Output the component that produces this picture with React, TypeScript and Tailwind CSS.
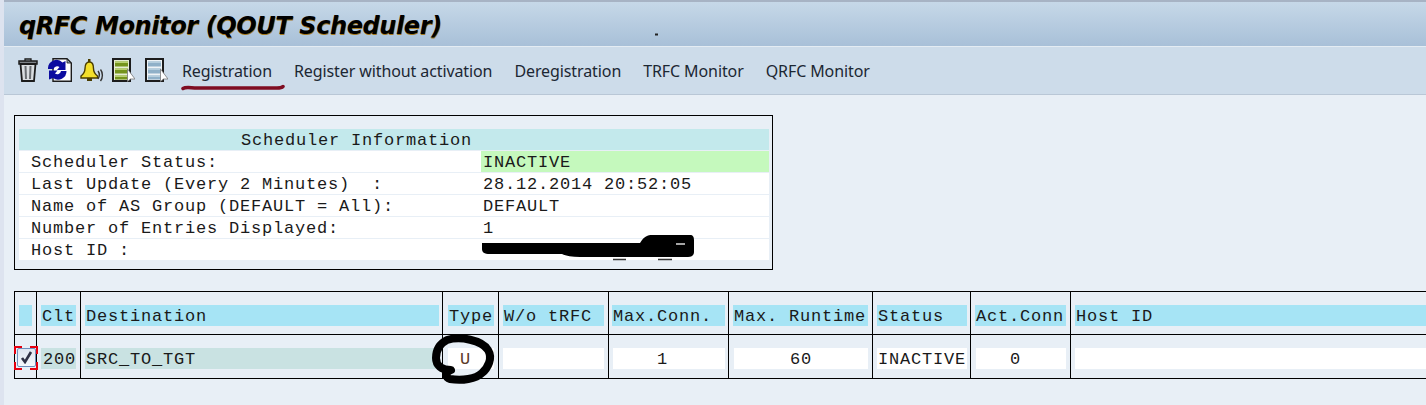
const MONO = "font-['Liberation_Mono',monospace] text-[17px] leading-[23px] tracking-[0.8px] text-[#1a1a1a] whitespace-pre";

const infoRows = [
  { label: "Scheduler Status:", value: "INACTIVE", green: true },
  { label: "Last Update (Every 2 Minutes)  :", value: "28.12.2014 20:52:05" },
  { label: "Name of AS Group (DEFAULT = All):", value: "DEFAULT" },
  { label: "Number of Entries Displayed:", value: "1" },
  { label: "Host ID :", value: "" },
];

function TrashIcon() {
  return (
    <svg width="20" height="24" viewBox="0 0 20 24">
      <path d="M1 3h18v3H1z" fill="#7d8287" stroke="#1c1c1c" strokeWidth="1.500" />
      <path d="M7 3V1h6v2" fill="none" stroke="#1c1c1c" strokeWidth="1.300" />
      <path d="M2.500 6h15l-1.500 17H4z" fill="#d9dde0" stroke="#1c1c1c" strokeWidth="1.800" />
      <path d="M7.500 8l.5 13M12.500 8l-.5 13" stroke="#6a6e72" strokeWidth="2" />
    </svg>
  );
}

function RefreshIcon() {
  return (
    <svg width="24" height="24" viewBox="0 0 24 24">
      <path d="M5 .7h14l4.300 4.300v18.300H5z" fill="#fff" stroke="#1c1c1c" strokeWidth="1.400" />
      <path d="M19 1v4h4z" fill="#8fa3a8" stroke="#1c1c1c" strokeWidth="0.800" />
      <path d="M0 11a8.500 8.500 0 0 1 14.500-6.500l3-1.500v9h-8.500l2.500-3a3.800 3.800 0 0 0-6 2z" fill="#0c0ca0" />
      <path d="M18.500 13a8.500 8.500 0 0 1-13.500 7l-4 1.500v-9h8.500l-2.500 3a3.800 3.800 0 0 0 6-2.500z" fill="#0c0ca0" />
    </svg>
  );
}

function BellIcon() {
  return (
    <svg width="24" height="23" viewBox="0 0 24 23">
      <path d="M8 0h2.500v3H8z" fill="#4a3d00" />
      <path d="M9.500 3c3 0 4 2.500 4 6.500 0 3.500 1.500 5.500 4 7.500v2H1v-2c2.500-2 4-4 4-7.500 0-4 1.500-6.500 4.500-6.500z" fill="#f3df2c" stroke="#4a3d00" strokeWidth="1.400" />
      <path d="M7 19h5v3H7z" fill="#4a3d00" />
      <path d="M18 12c1.500 2 1.500 5.500 0 8M20.500 10.500c2.500 3 2.500 8.500 0 11.500" fill="none" stroke="#333" strokeWidth="1.400" />
    </svg>
  );
}

function ListIcon({ band, top, bg }: { band: string; top: string; bg: string }) {
  return (
    <svg width="23" height="24" viewBox="0 0 23 24">
      <path d="M1 1h17v22H1z" fill={bg} stroke="#1c1c1c" strokeWidth="2" />
      <path d="M3 3.500h13v5H3zM3 10.500h13v5H3zM3 17.500h13v4H3z" fill={band} />
      <path d="M3 3.500h13v1.500H3zM3 10.500h13v1.500H3zM3 17.500h13v1.500H3z" fill={top} />
      <path d="M15.500 11v12.500l3-2.500h4.500z" fill="#fff" stroke="#777" strokeWidth="0.800" />
    </svg>
  );
}

function Cell({ className, children }: { className: string; children?: React.ReactNode }) {
  return <div className={"border-l border-black flex items-center pt-1 " + className}>{children}</div>;
}

function Bar({ className, children }: { className: string; children?: React.ReactNode }) {
  return <div className={"h-[21px] grow " + MONO + " " + className}>{children}</div>;
}

export default function App() {
  return (
    <div className="w-[1426px] h-[405px] overflow-hidden relative bg-[#e8eff6] border-l-4 border-l-[#dde3ef] font-['Liberation_Sans',sans-serif]">
      <header className="h-[47px] -ml-px bg-gradient-to-b from-[#c6d8e8] to-[#a8c0d8] border-t-2 border-t-[#a7b3c4] border-b border-b-[#e4ecf3] border-l border-l-[#b8c5d4] flex items-center pl-[15px] pt-[3px]">
        <h1 className="font-['DejaVu_Sans',sans-serif] font-bold italic text-[24px] tracking-[-0.4px] text-black [text-shadow:0.5px_0.5px_0_#a57a1e] whitespace-pre">
          qRFC Monitor (QOUT Scheduler)
        </h1>
      </header>

      <nav className="h-[48px] bg-[#cddcea] border-b border-b-[#b9c7d6] flex items-center pl-[14px]">
        <div className="flex items-center gap-2 -mt-[1px]">
          <TrashIcon />
          <span className="ml-0.5"><RefreshIcon /></span>
          <BellIcon />
          <ListIcon band="#75941c" top="#b8d070" bg="#e6edd2" />
          <span className="ml-0.5"><ListIcon band="#8fb0c8" top="#b4cddd" bg="#eef3f6" /></span>
        </div>
        <div className="flex items-center gap-[22px] ml-[14px] text-[16px] text-[#1c2733] font-['Noto_Sans',sans-serif] tracking-[-0.1px]">
          <span>Registration</span>
          <span>Register without activation</span>
          <span>Deregistration</span>
          <span>TRFC Monitor</span>
          <span>QRFC Monitor</span>
        </div>
      </nav>

      <section className="ml-[10px] mt-[20px] w-[759px] h-[155px] border border-black pt-[13px] pl-1 pr-[3px] flex flex-col gap-px">
        <div className={"h-[21px] bg-[#c3e9ec] pl-[222px] " + MONO}>Scheduler Information</div>
        {infoRows.map((row) => (
          <div key={row.label} className={"h-[21px] bg-white flex " + MONO}>
            <span className="w-[462px] pl-3">{row.label}</span>
            <span className={"grow pl-[2px] " + (row.green ? "bg-[#c5f9bd]" : "")}>{row.value}</span>
          </div>
        ))}
      </section>

      <section className="ml-[10px] mt-[21px] w-[1412px] border-y border-black">
        <div className="h-[43px] border-b border-black grid grid-cols-[22px_44px_362px_56px_110px_120px_144px_98px_100px_356px]">
          <Cell className="pl-1 pr-1"><Bar className="bg-[#a6e4f5]" /></Cell>
          <Cell className="pl-1 pr-1"><Bar className="bg-[#a6e4f5] pl-px">Clt</Bar></Cell>
          <Cell className="pl-1 pr-[3px]"><Bar className="bg-[#a6e4f5] pl-px">Destination</Bar></Cell>
          <Cell className="pl-[5px] pr-1"><Bar className="bg-[#a6e4f5] pl-px">Type</Bar></Cell>
          <Cell className="pl-1 pr-1"><Bar className="bg-[#a6e4f5] pl-px">W/o tRFC</Bar></Cell>
          <Cell className="pl-[3px] pr-[3px]"><Bar className="bg-[#a6e4f5] pl-px">Max.Conn.</Bar></Cell>
          <Cell className="pl-1 pr-1"><Bar className="bg-[#a6e4f5] pl-px">Max. Runtime</Bar></Cell>
          <Cell className="pl-1 pr-[3px]"><Bar className="bg-[#a6e4f5] pl-px">Status</Bar></Cell>
          <Cell className="pl-1 pr-1"><Bar className="bg-[#a6e4f5] pl-px">Act.Conn</Bar></Cell>
          <Cell className="pl-1"><Bar className="bg-[#a6e4f5] pl-px">Host ID</Bar></Cell>
        </div>
        <div className="h-[43px] grid grid-cols-[22px_44px_362px_56px_110px_120px_144px_98px_100px_356px]">
          <Cell className="pl-0.5">
            <span className="w-[19px] h-[19px] -mt-[3px] rounded-[2px] bg-gradient-to-b from-[#dfe6f0] to-[#f4f7fb] border border-[#6f8fbd] flex items-center justify-center">
              <svg width="13" height="13" viewBox="0 0 13 13">
                <path d="M2 7l3 4 6-10" fill="none" stroke="#2f3145" strokeWidth="2.600" />
              </svg>
            </span>
          </Cell>
          <Cell className="pl-1 pr-1"><Bar className="bg-[#c9e2e2] pl-[2px]">200</Bar></Cell>
          <Cell className="pl-1 pr-[3px]"><Bar className="bg-[#c9e2e2] pl-px">SRC_TO_TGT</Bar></Cell>
          <Cell className="pl-[5px] pr-1"><Bar className="bg-white pl-[12px]"><span className="text-[#5c3a2a]">U</span></Bar></Cell>
          <Cell className="pl-1 pr-1"><Bar className="bg-white" /></Cell>
          <Cell className="pl-1 pr-[3px]"><Bar className="bg-white pl-[44px]">1</Bar></Cell>
          <Cell className="pl-[5px] pr-1"><Bar className="bg-white pl-[56px]">60</Bar></Cell>
          <Cell className="pl-1 pr-[3px]"><Bar className="bg-white pl-px">INACTIVE</Bar></Cell>
          <Cell className="pl-[5px] pr-1"><Bar className="bg-white pl-[34px]">0</Bar></Cell>
          <Cell className="pl-1"><Bar className="bg-white" /></Cell>
        </div>
      </section>

      {/* hand drawn annotations on top of the screenshot */}
      <svg className="absolute left-[-4px] top-0 pointer-events-none" width="1426" height="405" viewBox="0 0 1426 405">
        <path d="M183 88.500c3-2 8-.5 14-.5h80c3 0 5-.5 6-1.500" fill="none" stroke="#7f0d22" strokeWidth="3.500" strokeLinecap="round" />
        <path d="M655 34.500h3" stroke="#222" strokeWidth="2" />
        <path d="M482 243H640C644 236 648 235 652 235H690C693 235 694 237 694 240V252C694 255 692 257 688 257H580C572 257 566 256 562 254H490C484 254 482 252 482 249z" fill="#000" />
        <path d="M676 244h9" stroke="#ddd" strokeWidth="1.500" />
        <path d="M613 259.500h13M658 259.500h14" stroke="#333" strokeWidth="1.500" />
        <path d="M447 340C460 336 482 340 488 350C493 358 488 368 482 373C476 379 462 381 450 379C445 378 445 372 451 370C441 370 436 365 436 358C436 350 439 344 447 340z" fill="none" stroke="#000" strokeWidth="8" strokeLinejoin="round" />
        <path d="M15 354v-7h7M30 347h7v7M15 362v7h7M30 369h7v-7" fill="none" stroke="#e5000f" strokeWidth="2" />
      </svg>
    </div>
  );
}
